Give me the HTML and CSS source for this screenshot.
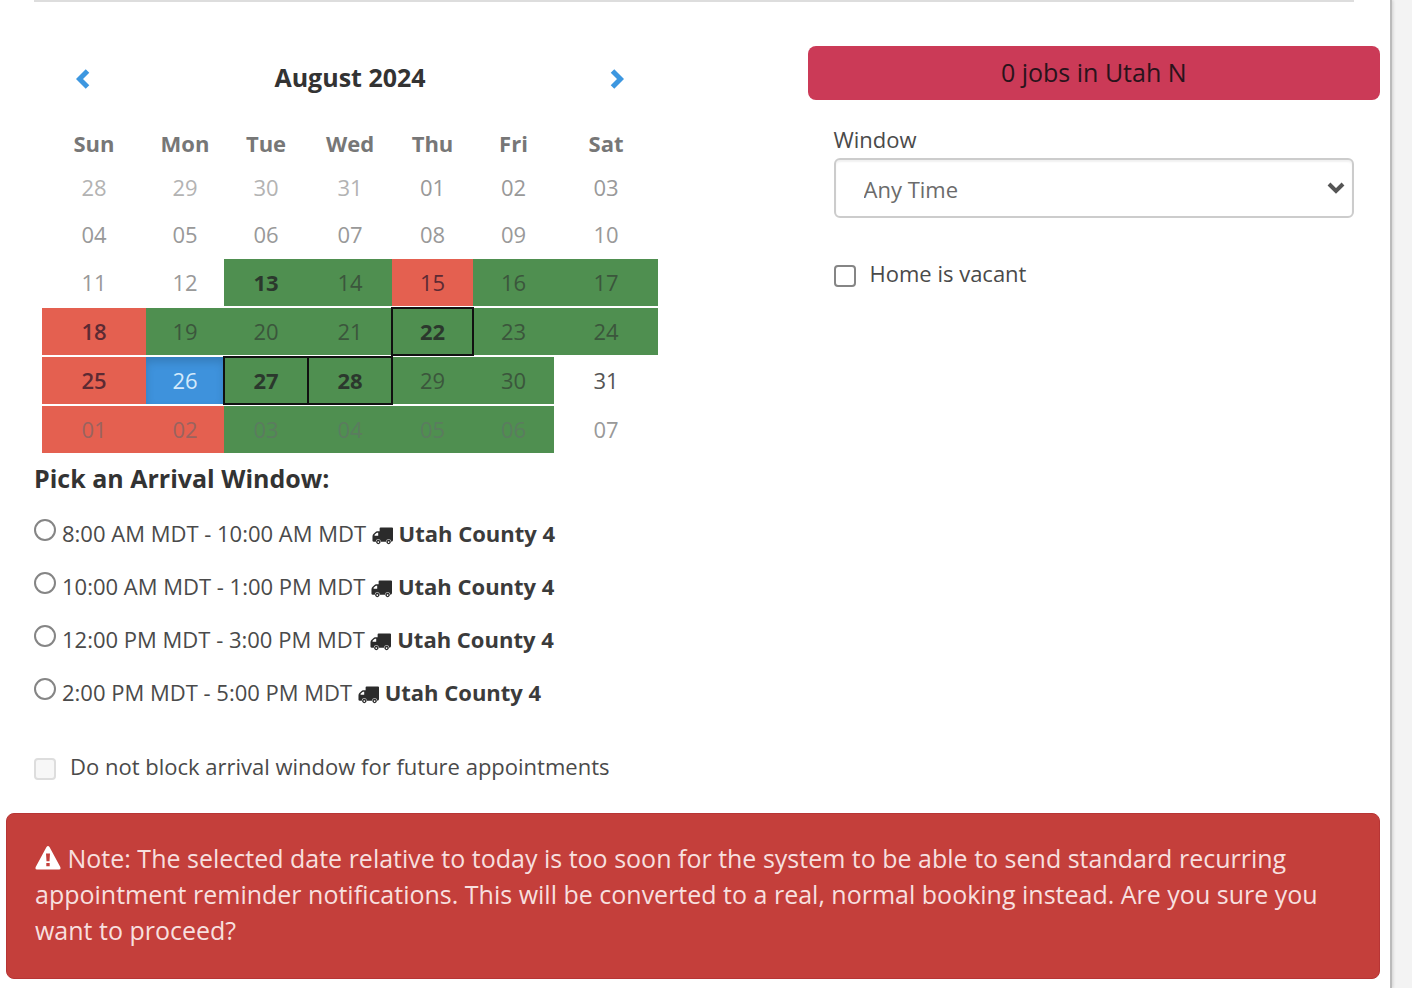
FILE: index.html
```html
<!DOCTYPE html>
<html lang="en">
<head>
    <meta charset="UTF-8">
    <meta name="viewport" content="width=device-width, initial-scale=1.0">
    <title>Schedule Appointment</title>
    <link rel="stylesheet" href="styles.css">
</head>
<body>
    <svg class="sprite" aria-hidden="true">
        <symbol id="truck" viewBox="0 0 22 18">
            <path fill-rule="evenodd" d="M8 1Q8 0 9 0H21Q22 0 22 1V13.500Q22 15 20 15A2.600 2.600 0 0 0 14.800 15H9.200A2.600 2.600 0 0 0 4 15H2Q.5 15 .5 14V9.500Q.5 8 1.500 7L3.500 5Q4.300 4 5.500 4H8ZM2.700 8.800H6.500V5.600H5.300Q4.800 5.600 4.400 6L2.700 7.800Z"/>
            <path fill-rule="evenodd" d="M6.600 13a2.300 2.300 0 1 0 .01 0ZM6.600 14.500a.8 .8 0 1 1-.01 0ZM17.400 13a2.300 2.300 0 1 0 .01 0ZM17.400 14.500a.8 .8 0 1 1-.01 0Z"/>
        </symbol>
    </svg>

    <main class="panel">
        <hr class="divider">
        <div class="schedule">
            <section class="booking">
                <div class="calendar">
                    <div class="calendar-nav">
                        <button type="button" aria-label="Previous month">
                            <svg class="chevron" viewBox="0 0 14 20"><path d="M11.500 2L3.500 10L11.500 18"/></svg>
                        </button>
                        <h2>August 2024</h2>
                        <button type="button" aria-label="Next month">
                            <svg class="chevron" viewBox="0 0 14 20"><path d="M2.500 2L10.500 10L2.500 18"/></svg>
                        </button>
                    </div>
                    <table>
                        <thead>
                            <tr><th>Sun</th><th>Mon</th><th>Tue</th><th>Wed</th><th>Thu</th><th>Fri</th><th>Sat</th></tr>
                        </thead>
                        <tbody>
                            <tr class="past">
                                <td><button type="button" class="day other">28</button></td>
                                <td><button type="button" class="day other">29</button></td>
                                <td><button type="button" class="day other">30</button></td>
                                <td><button type="button" class="day other">31</button></td>
                                <td><button type="button" class="day">01</button></td>
                                <td><button type="button" class="day">02</button></td>
                                <td><button type="button" class="day">03</button></td>
                            </tr>
                            <tr class="past">
                                <td><button type="button" class="day">04</button></td>
                                <td><button type="button" class="day">05</button></td>
                                <td><button type="button" class="day">06</button></td>
                                <td><button type="button" class="day">07</button></td>
                                <td><button type="button" class="day">08</button></td>
                                <td><button type="button" class="day">09</button></td>
                                <td><button type="button" class="day">10</button></td>
                            </tr>
                            <tr>
                                <td><button type="button" class="day">11</button></td>
                                <td><button type="button" class="day">12</button></td>
                                <td><button type="button" class="day open bold">13</button></td>
                                <td><button type="button" class="day open">14</button></td>
                                <td><button type="button" class="day full">15</button></td>
                                <td><button type="button" class="day open">16</button></td>
                                <td><button type="button" class="day open">17</button></td>
                            </tr>
                            <tr>
                                <td><button type="button" class="day full medium">18</button></td>
                                <td><button type="button" class="day open">19</button></td>
                                <td><button type="button" class="day open">20</button></td>
                                <td><button type="button" class="day open">21</button></td>
                                <td><button type="button" class="day open bold outlined">22</button></td>
                                <td><button type="button" class="day open">23</button></td>
                                <td><button type="button" class="day open">24</button></td>
                            </tr>
                            <tr>
                                <td><button type="button" class="day full medium">25</button></td>
                                <td><button type="button" class="day selected">26</button></td>
                                <td><button type="button" class="day open bold outlined">27</button></td>
                                <td><button type="button" class="day open bold outlined">28</button></td>
                                <td><button type="button" class="day open">29</button></td>
                                <td><button type="button" class="day open">30</button></td>
                                <td><button type="button" class="day available">31</button></td>
                            </tr>
                            <tr>
                                <td><button type="button" class="day full other">01</button></td>
                                <td><button type="button" class="day full other">02</button></td>
                                <td><button type="button" class="day open other">03</button></td>
                                <td><button type="button" class="day open other">04</button></td>
                                <td><button type="button" class="day open other">05</button></td>
                                <td><button type="button" class="day open other">06</button></td>
                                <td><button type="button" class="day">07</button></td>
                            </tr>
                        </tbody>
                    </table>
                </div>

                <fieldset class="arrival">
                    <legend>Pick an Arrival Window:</legend>
                    <label class="slot">
                        <input type="radio" name="arrival">
                        <span>8:00 AM MDT - 10:00 AM MDT <svg class="truck"><use href="#truck"/></svg> <b>Utah County 4</b></span>
                    </label>
                    <label class="slot">
                        <input type="radio" name="arrival">
                        <span>10:00 AM MDT - 1:00 PM MDT <svg class="truck"><use href="#truck"/></svg> <b>Utah County 4</b></span>
                    </label>
                    <label class="slot">
                        <input type="radio" name="arrival">
                        <span>12:00 PM MDT - 3:00 PM MDT <svg class="truck"><use href="#truck"/></svg> <b>Utah County 4</b></span>
                    </label>
                    <label class="slot">
                        <input type="radio" name="arrival">
                        <span>2:00 PM MDT - 5:00 PM MDT <svg class="truck"><use href="#truck"/></svg> <b>Utah County 4</b></span>
                    </label>
                </fieldset>

                <label class="check">
                    <input type="checkbox" disabled>
                    <span>Do not block arrival window for future appointments</span>
                </label>
            </section>

            <section class="options">
                <div class="jobs">0 jobs in Utah N</div>
                <div class="filters">
                    <label class="field-label" for="window">Window</label>
                    <div class="select-wrap">
                        <select id="window">
                            <option>Any Time</option>
                        </select>
                        <svg class="caret" viewBox="0 0 18 12"><path d="M2 2L9 9L16 2"/></svg>
                    </div>
                    <label class="check">
                        <input type="checkbox">
                        <span>Home is vacant</span>
                    </label>
                </div>
            </section>
        </div>

        <div class="alert" role="alert">
            <svg class="warning" viewBox="0 0 26 24">
                <path fill-rule="evenodd" d="M11.500 1Q13 -.8 14.500 1L25.300 21Q26.200 23.500 24 23.500H2Q-.2 23.500 .7 21ZM11 7.500L11.500 15.300H14.500L15 7.500ZM11.300 17V20.300H14.700V17Z"/>
            </svg>
            Note: The selected date relative to today is too soon for the system to be able to send standard recurring appointment reminder notifications. This will be converted to a real, normal booking instead. Are you sure you want to proceed?
        </div>
    </main>
</body>
</html>
```

FILE: styles.css
```css
* {
    box-sizing: border-box;
}
body {
    margin: 0;
    background-color: #f3f3f3;
    color: #4a4a4a;
    font-family: "Open Sans", sans-serif;
    font-size: 22px;
    line-height: 32px;
}
button, input, select {
    font: inherit;
}
.sprite {
    display: none;
}
.panel {
    min-height: 100vh;
    margin-right: 20px;
    padding: 0 10px 8px 6px;
    background-color: #fff;
    border-right: 2px solid #bbb;
    box-shadow: 1px 0 3px rgba(0, 0, 0, 0.15);
}
.divider {
    height: 2px;
    margin: 0 26px 44px 28px;
    border: 0;
    background-color: #ddd;
}
.schedule {
    display: grid;
    grid-template-columns: 7fr 5fr;
}
.booking {
    padding-left: 28px;
}

/* calendar */
.calendar {
    width: 616px;
    margin-left: 8px;
}
.calendar-nav {
    display: flex;
    align-items: center;
    justify-content: space-between;
    height: 62px;
    padding: 0 34px;
}
.calendar-nav h2 {
    margin: 0;
    color: #333;
    font-size: 25px;
    font-weight: 700;
}
.calendar-nav button {
    display: flex;
    padding: 4px 0 0;
    background: none;
    border: 0;
}
.chevron {
    width: 14px;
    height: 20px;
    fill: none;
    stroke: #3d97e0;
    stroke-width: 5;
}
table {
    width: 100%;
    table-layout: fixed;
    border-collapse: collapse;
}
th {
    width: 81px;
    height: 56px;
    padding: 13px 0 0;
    color: #777;
    font-weight: 700;
}
th:first-child, th:last-child {
    width: 104px;
}
th:nth-child(2) {
    width: 78px;
}
th:nth-child(3), th:nth-child(4) {
    width: 84px;
}
td {
    padding: 1px 0;
}
.day {
    display: block;
    width: 100%;
    height: 47px;
    padding: 0 0 2px;
    background: none;
    border: 0;
    color: #999;
}
.past .day {
    height: 45px;
}
.day.other {
    color: #b3b3b3;
}
.day.available {
    color: #555;
}
.day.open {
    background-color: #4f8f50;
    color: #3b563c;
}
.day.full {
    background-color: #e46050;
    color: #5c2a33;
}
.day.open.other {
    color: #5b7c5f;
}
.day.full.other {
    color: #9a635f;
}
.day.medium {
    font-weight: 600;
}
.day.open.bold {
    color: #2b382d;
    font-weight: 700;
}
.day.outlined {
    outline: 2px solid #111;
    outline-offset: -1px;
}
.day.selected {
    background-color: #3e92dc;
    color: #d4eafb;
    box-shadow: inset 0 5px 8px rgba(0, 0, 0, 0.15);
}

/* arrival windows */
.arrival {
    margin: 0;
    padding: 0;
    border: 0;
}
.arrival legend {
    padding: 8px 0 23px;
    color: #333;
    font-size: 25px;
    font-weight: 700;
}
.slot {
    display: flex;
    gap: 6px;
    margin-bottom: 21px;
}
.slot input {
    width: 22px;
    height: 22px;
    margin: 2px 0 0;
    appearance: none;
    background-color: #fff;
    border: 2px solid #858585;
    border-radius: 50%;
}
.slot b {
    color: #3b3b3b;
}
.truck {
    width: 21px;
    height: 18px;
    vertical-align: -3px;
    fill: #2b2b2b;
}
.check {
    display: flex;
    align-items: center;
    gap: 14px;
}
.check input {
    width: 22px;
    height: 22px;
    margin: 5px 0 0;
    appearance: none;
    background-color: #fff;
    border: 2px solid #858585;
    border-radius: 4px;
}
.check input:disabled {
    background-color: #f7f7f7;
    border-color: #ddd;
}
.booking .check {
    margin-top: 21px;
}

/* right column */
.jobs {
    padding: 10px 11px 12px;
    background-color: #cb3a57;
    border-radius: 8px;
    color: #29131b;
    font-size: 25px;
    text-align: center;
}
.filters {
    padding: 23px 26px 0;
}
.field-label {
    display: block;
}
.select-wrap {
    position: relative;
    margin: 3px 0 39px;
}
.select-wrap select {
    display: block;
    width: 100%;
    height: 60px;
    padding: 2px 48px 0 28px;
    appearance: none;
    background-color: #fff;
    border: 2px solid #ccc;
    border-radius: 6px;
    box-shadow: inset 0 2px 2px rgba(0, 0, 0, 0.06);
    color: #6b6b6b;
}
.caret {
    position: absolute;
    top: 24px;
    right: 9px;
    width: 18px;
    height: 12px;
    fill: none;
    stroke: #555;
    stroke-width: 4;
    pointer-events: none;
}

/* booking notice */
.alert {
    margin-top: 31px;
    padding: 26px 28px 30px;
    background-color: #c43f3b;
    border: 1px solid #b73535;
    border-radius: 8px;
    color: #f7dfdf;
    font-size: 25px;
    line-height: 36px;
}
.warning {
    width: 26px;
    height: 24px;
    vertical-align: -2px;
    fill: #fff;
}
```
